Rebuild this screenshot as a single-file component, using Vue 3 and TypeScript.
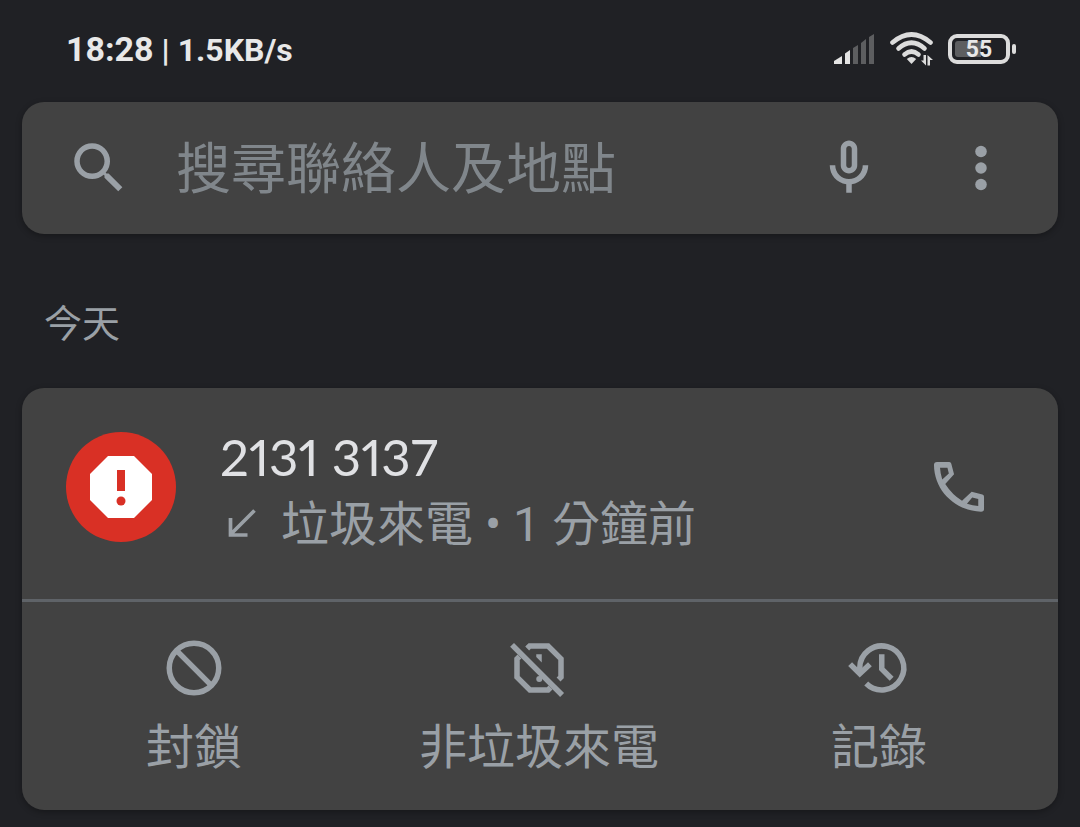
<script setup lang="ts">
import { ref } from 'vue'

interface Action {
  id: string
  label: string
}

const query = ref('')
const actions: Action[] = [
  { id: 'block', label: '封鎖' },
  { id: 'not-spam', label: '非垃圾來電' },
  { id: 'history', label: '記錄' },
]
</script>

<template>
  <main class="screen">
    <header class="status">
      <div class="status-text">
        <span class="clock">18:28</span>
        <span class="rate">| 1.5KB/s</span>
      </div>
      <div class="status-icons">
        <svg class="signal" viewBox="0 0 42 30" aria-hidden="true">
          <path d="M0 30v-3l8-5v8z" fill="#e4e4e4" />
          <path d="M11 30V19.500l5-3.500v14z" fill="#e4e4e4" />
          <path d="M19 30V14l5-3v19zM27 30V9l5-4v25zM35 30V3l5-3v30z" fill="#5d5e60" />
        </svg>
        <svg class="wifi" viewBox="0 0 44 34" aria-hidden="true">
          <g fill="none" stroke="#dcdcdc" stroke-width="4.600" stroke-linecap="round">
            <path d="M2.500 10.500Q21.500-5.500 40.500 10.500" />
            <path d="M8.500 16.500Q21.500 5 34.500 16.500" />
            <path d="M14.500 22.500Q21.500 16.500 28.500 22.500" />
          </g>
          <path d="M16.800 27Q21.500 23 26.200 27L21.500 32z" fill="#dcdcdc" />
          <path d="M36 23v10.500l-5-5h2.500V23zM37.500 33.500V23l5.500 5h-3v5.500z" fill="#dcdcdc" />
        </svg>
        <div class="battery">
          <span class="battery-body"><span class="battery-level">55</span></span>
          <span class="battery-tip"></span>
        </div>
      </div>
    </header>

    <form class="search" role="search" @submit.prevent>
      <svg class="icon" viewBox="0 0 24 24" aria-hidden="true">
        <path d="M15.500 14h-.79l-.28-.27A6.471 6.471 0 0 0 16 9.500 6.500 6.500 0 1 0 9.500 16c1.610 0 3.090-.59 4.230-1.570l.27.28v.79l5 4.990L20.490 19l-4.990-5zm-6 0C7.010 14 5 11.990 5 9.500S7.010 5 9.500 5 14 7.010 14 9.500 11.990 14 9.500 14z" />
      </svg>
      <input v-model="query" class="search-input" type="text" placeholder="搜尋聯絡人及地點" aria-label="搜尋聯絡人及地點" />
      <button class="icon-button mic" type="button" aria-label="語音搜尋">
        <svg class="icon" viewBox="0 0 24 24" aria-hidden="true">
          <path d="M12 14c1.660 0 3-1.340 3-3V5c0-1.660-1.340-3-3-3S9 3.340 9 5v6c0 1.660 1.340 3 3 3zm-1-9c0-.55.45-1 1-1s1 .45 1 1v6c0 .55-.45 1-1 1s-1-.45-1-1V5zm6 6c0 2.760-2.240 5-5 5s-5-2.240-5-5H5c0 3.530 2.610 6.430 6 6.920V21h2v-3.080c3.390-.49 6-3.390 6-6.920h-2z" />
        </svg>
      </button>
      <button class="icon-button" type="button" aria-label="更多選項">
        <svg class="icon" viewBox="0 0 24 24" aria-hidden="true">
          <circle cx="12" cy="6" r="2.100" />
          <circle cx="12" cy="12" r="2.100" />
          <circle cx="12" cy="18" r="2.100" />
        </svg>
      </button>
    </form>

    <h2 class="day">今天</h2>

    <section class="card">
      <div class="call">
        <span class="avatar">
          <svg viewBox="0 0 62 62" aria-hidden="true">
            <path d="M18 0h26l18 18v26L44 62H18L0 44V18z" fill="#fff" />
            <path d="M27 14h8v21h-8z" fill="#d93025" />
            <circle cx="31" cy="45" r="4.500" fill="#d93025" />
          </svg>
        </span>
        <div class="details">
          <p class="number">2131 3137</p>
          <p class="meta">
            <svg class="arrow" viewBox="0 0 32 32" aria-hidden="true">
              <path d="M29.500 1.500L5.500 25.500M5.500 9v17h17" fill="none" stroke="#9aa0a6" stroke-width="3.700" />
            </svg>
            <span>垃圾來電 • 1 分鐘前</span>
          </p>
        </div>
        <button class="icon-button" type="button" aria-label="致電">
          <svg class="icon" viewBox="0 0 24 24" aria-hidden="true">
            <path
              fill-rule="evenodd"
              d="M4 2.900h4.500q.55 0 .7.600l1 3.900L7 10.900Q9.500 14.800 13.100 17l3.500-3.300 3.900 1q.6.200.6.800V20q0 1-1.100 1C10.600 20.600 3 13.400 2.900 4q0-1.100 1.100-1.100zM5.100 5h2.700l.5 2.100-2.400 2.200Q5.200 7 5.100 5zM16.800 15.800l2.200.6v2.500q-2-.1-4.100-.8z"
            />
          </svg>
        </button>
      </div>

      <div class="actions">
        <button v-for="action in actions" :key="action.id" class="action" type="button">
          <svg class="icon outline" viewBox="0 0 24 24" aria-hidden="true">
            <g v-if="action.id === 'block'">
              <circle cx="12" cy="12" r="9" />
              <path d="M5.700 5.700l12.600 12.600" />
            </g>
            <g v-else-if="action.id === 'not-spam'">
              <path d="M7.700 4.900L8.600 4h6.700L20 8.700v6.600l-.9.900" />
              <path d="M4.900 7.800L4 8.700v6.600L8.700 20h6.600l.9-.9" />
              <path d="M2.200 3.600l18.200 18.200" />
              <path class="solid" d="M11 7h2v3l-2-2z" />
              <circle class="solid" cx="12.100" cy="16" r="1.100" />
            </g>
            <g v-else>
              <path d="M5 13.500V12a8 8 0 1 1 2.350 5.650" />
              <path d="M1.500 10.600L5 14.100l3.700-3.500" />
              <path d="M13 7v5.300l3.600 3.600" />
            </g>
          </svg>
          <span>{{ action.label }}</span>
        </button>
      </div>
    </section>
  </main>
</template>

<style>
html,
body {
  background: #202125;
}
</style>

<style scoped>
.screen {
  box-sizing: border-box;
  min-height: 100vh;
  padding: 0 22px 17px;
  color: #9aa0a6;
  background: #202125;
  font-family: Roboto, 'Noto Sans CJK TC', sans-serif;
}

.status {
  display: flex;
  align-items: center;
  justify-content: space-between;
  height: 102px;
  padding: 0 42px 4px 44px;
  box-sizing: border-box;
  color: #e8e8e8;
}

.status-text {
  display: flex;
  align-items: baseline;
  gap: 8px;
  font-weight: 700;
  line-height: 40px;
}

.clock {
  font-size: 34px;
}

.rate {
  font-size: 32px;
}

.status-icons {
  display: flex;
  align-items: center;
  gap: 14px;
}

.signal {
  width: 42px;
  height: 30px;
}

.wifi {
  width: 44px;
  height: 34px;
}

.battery {
  display: flex;
  align-items: center;
  gap: 2px;
}

.battery-body {
  box-sizing: border-box;
  width: 62px;
  height: 30px;
  padding: 3px;
  border: 4px solid #dcdcdc;
  border-radius: 9px;
}

.battery-level {
  display: block;
  height: 16px;
  border-radius: 3px;
  background: linear-gradient(90deg, #5d5e60 55%, transparent 55%);
  font-size: 23px;
  font-weight: 700;
  line-height: 18px;
  text-align: center;
}

.battery-tip {
  width: 4px;
  height: 10px;
  border-radius: 2px;
  background: #dcdcdc;
}

.search,
.card {
  border-radius: 22px;
  background: #424242;
  box-shadow: 0 2px 6px rgba(0, 0, 0, 0.3);
}

.search {
  display: flex;
  align-items: center;
  height: 132px;
  padding: 0 44px;
}

.icon {
  display: block;
  flex: none;
  width: 66px;
  height: 66px;
  fill: #9aa0a6;
}

.outline {
  fill: none;
  stroke: #9aa0a6;
  stroke-width: 2;
}

.solid {
  fill: #9aa0a6;
  stroke: none;
}

.search-input {
  flex: 1;
  min-width: 0;
  height: 88px;
  margin-left: 44px;
  padding: 2px 0 0;
  border: 0;
  outline: 0;
  color: #e8eaed;
  background: transparent;
  font: inherit;
  font-size: 55px;
}

.search-input::placeholder {
  color: #80868b;
  opacity: 1;
}

.icon-button {
  flex: none;
  padding: 0;
  border: 0;
  background: transparent;
}

.mic {
  margin-right: 66px;
}

.day {
  margin: 0;
  padding: 62px 22px 36px;
  font-size: 38px;
  font-weight: 400;
  line-height: 56px;
}

.call {
  display: flex;
  align-items: center;
  height: 214px;
  padding: 0 66px 13px 44px;
  box-sizing: border-box;
  border-bottom: 3px solid #5f6368;
}

.avatar {
  display: flex;
  flex: none;
  align-items: center;
  justify-content: center;
  width: 110px;
  height: 110px;
  border-radius: 50%;
  background: #d93025;
}

.avatar svg {
  width: 62px;
  height: 62px;
}

.details {
  flex: 1;
  margin-left: 44px;
  padding-top: 10px;
}

.number,
.meta {
  margin: 0;
}

.number {
  color: #e0e1e4;
  font-family: Lato, sans-serif;
  font-feature-settings: 'pnum';
  font-size: 51px;
  line-height: 66px;
}

.meta {
  display: flex;
  align-items: center;
  gap: 24px;
  padding-left: 5px;
  font-size: 48px;
  line-height: 70px;
}

.arrow {
  width: 32px;
  height: 32px;
}

.actions {
  display: grid;
  grid-template-columns: 344fr 346fr 334fr;
  padding: 33px 12px 29px 0;
}

.action {
  display: flex;
  flex-direction: column;
  align-items: center;
  gap: 14px;
  padding: 0;
  border: 0;
  color: #9aa0a6;
  background: transparent;
  font: inherit;
  font-size: 48px;
  line-height: 66px;
}
</style>
